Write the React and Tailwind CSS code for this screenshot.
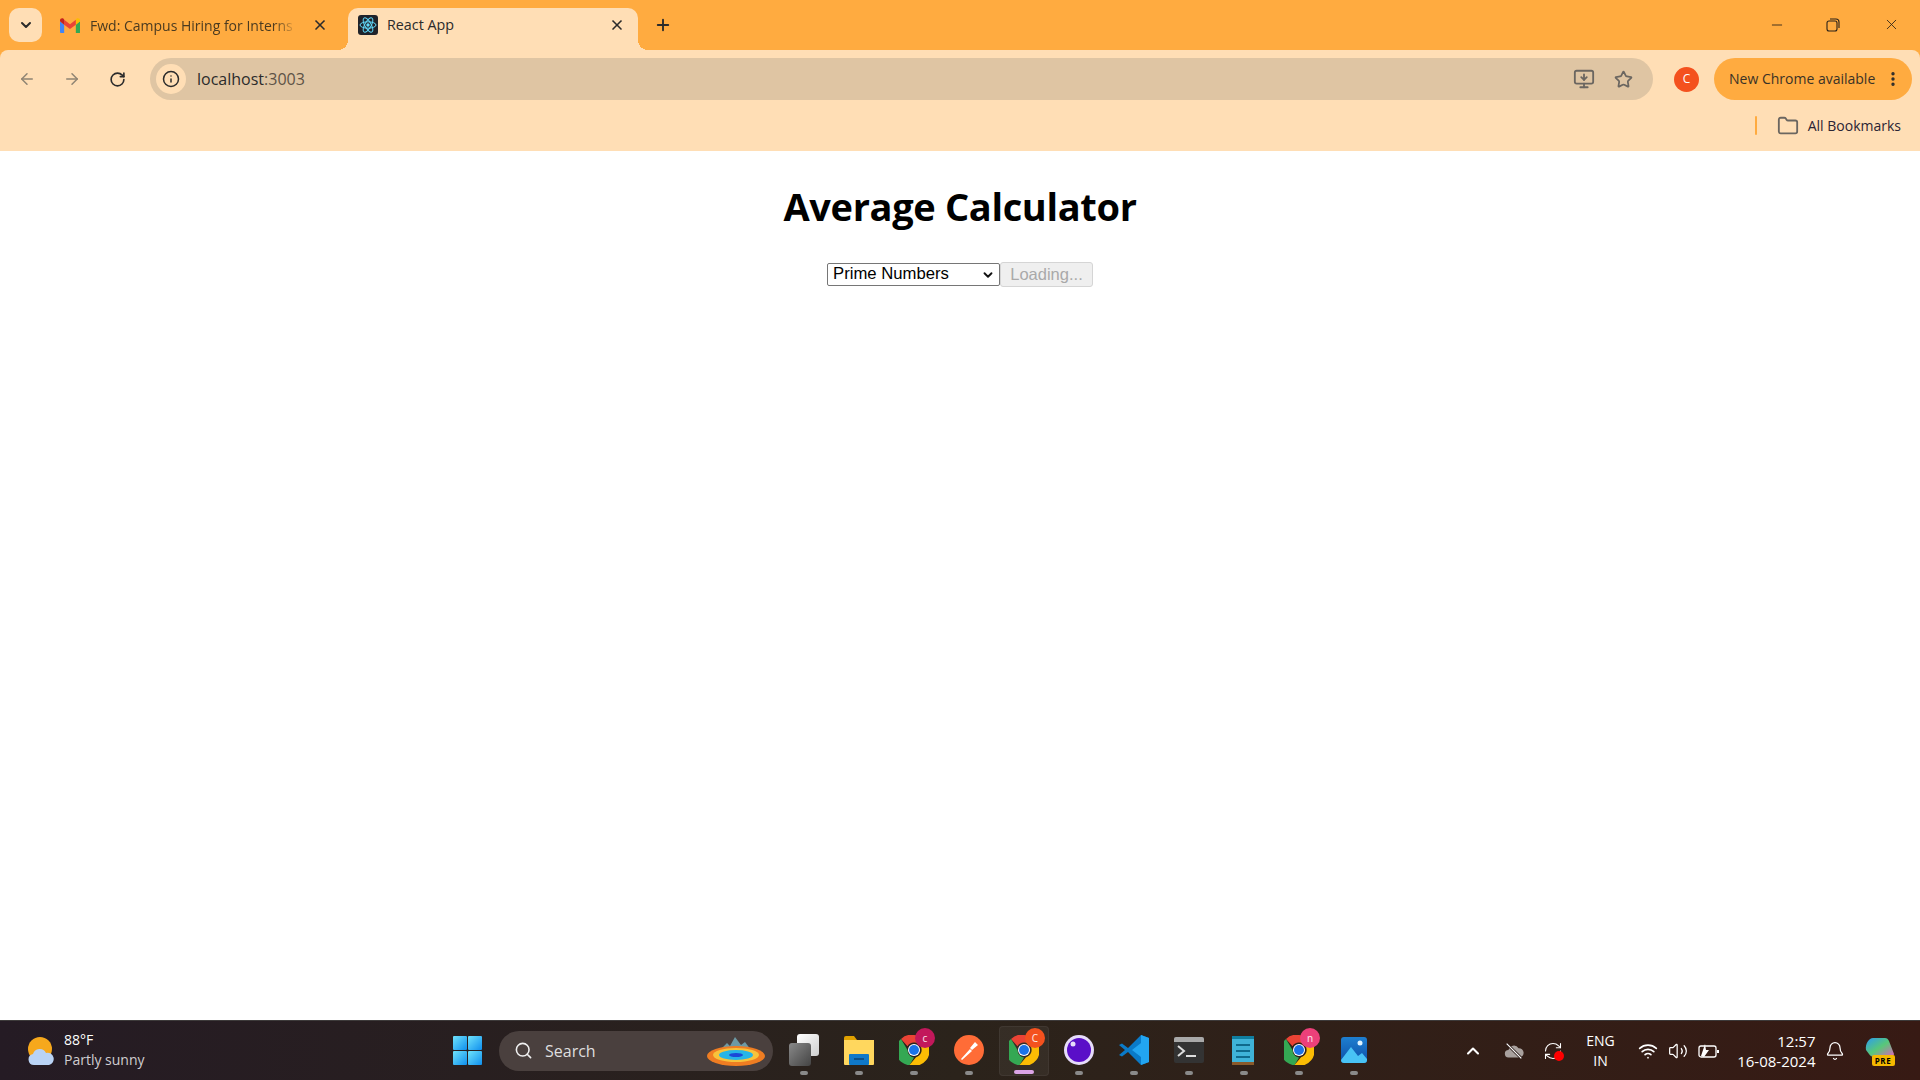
import {
  ArrowLeft,
  ArrowRight,
  RotateCw,
  Info,
  Star,
  Folder,
  ChevronDown,
  ChevronUp,
  X,
  Plus,
  Minus,
  Search,
  Wifi,
  Volume2,
  Bell,
  MonitorDown,
  EllipsisVertical,
  RefreshCw,
} from 'lucide-react';

const GmailIcon = () => (
  <svg viewBox="0 0 24 18" width="20" height="15" className="flex-none">
    <path d="M1 18h4V8L0 4v12.500A1.500 1.500 0 0 0 1 18z" fill="#4285f4" />
    <path d="M19 18h4a1 1 0 0 0 1-1.500V4l-5 4z" fill="#34a853" />
    <path d="M19 2v6l5-4V2.500C24 .5 21.500-.5 20 .7z" fill="#fbbc04" />
    <path d="M5 8V2l7 5.500L19 2v6l-7 5.300z" fill="#ea4335" />
    <path d="M0 2.500V4l5 4V2L4 .7C2.500-.5 0 .5 0 2.500z" fill="#c5221f" />
  </svg>
);

const ReactIcon = () => (
  <svg viewBox="0 0 20 20" width="20" height="20" className="flex-none">
    <rect width="20" height="20" rx="3" fill="#20232a" />
    <g fill="none" stroke="#61dafb" strokeWidth="1">
      <ellipse cx="10" cy="10" rx="8" ry="3.200" />
      <ellipse cx="10" cy="10" rx="8" ry="3.200" transform="rotate(60 10 10)" />
      <ellipse cx="10" cy="10" rx="8" ry="3.200" transform="rotate(120 10 10)" />
    </g>
    <circle cx="10" cy="10" r="1.700" fill="#61dafb" />
  </svg>
);

const ChromeIcon = ({ badge, badgeColor }) => (
  <div className="relative w-[30px] h-[30px]">
    <svg viewBox="0 0 30 30" width="30" height="30">
      <path d="M15 0a15 15 0 0 1 13 7.500H15a7.500 7.500 0 0 0-6.500 3.750L2 3.900A15 15 0 0 1 15 0z" fill="#ea4335" />
      <path d="M2 3.900l6.500 11.100A7.500 7.500 0 0 0 15 22.500l-4.500 7.800A15 15 0 0 1 2 3.900z" fill="#34a853" />
      <path d="M28 7.500A15 15 0 0 1 10.500 30l6.500-7.800A7.500 7.500 0 0 0 21.500 11 7.500 7.500 0 0 0 15 7.500z" fill="#fbbc04" />
      <circle cx="15" cy="15" r="6" fill="#fff" />
      <circle cx="15" cy="15" r="5" fill="#1a73e8" />
    </svg>
    <span
      className={`absolute -top-[7px] -right-[6px] w-[20px] h-[20px] rounded-full flex items-center justify-center text-[10px] leading-none text-white/90 ${badgeColor}`}
    >
      {badge}
    </span>
  </div>
);

const WeatherIcon = () => (
  <svg viewBox="0 0 28 30" width="28" height="30">
    <circle cx="13" cy="13" r="12" fill="#f6a81c" />
    <path d="M7 29a5.500 5.500 0 0 1-1-10.900 7 7 0 0 1 13-1.200 6 6 0 0 1 3 12.100z" fill="#b9d3f5" />
  </svg>
);

const WindowsIcon = () => (
  <svg viewBox="0 0 29 29" width="29" height="29">
    <defs>
      <linearGradient id="win" x1="0" y1="0" x2="1" y2="1">
        <stop offset="0" stopColor="#6fe3fb" />
        <stop offset="1" stopColor="#0f8fee" />
      </linearGradient>
    </defs>
    <rect x="0" y="0" width="14" height="14" rx="1" fill="url(#win)" />
    <rect x="15" y="0" width="14" height="14" rx="1" fill="url(#win)" />
    <rect x="0" y="15" width="14" height="14" rx="1" fill="url(#win)" />
    <rect x="15" y="15" width="14" height="14" rx="1" fill="url(#win)" />
  </svg>
);

const GeyserIcon = () => (
  <svg viewBox="0 0 58 32" width="58" height="32">
    <path d="M14 14l6-6 3 3 5-9 6 8 4-3 6 8z" fill="#6d9aa5" />
    <ellipse cx="29" cy="21" rx="29" ry="10" fill="#ef7d22" />
    <ellipse cx="29" cy="20" rx="23" ry="7" fill="#f7c33b" />
    <ellipse cx="29" cy="20" rx="17" ry="5" fill="#26b5e8" />
    <ellipse cx="29" cy="20" rx="7" ry="2" fill="#1a49d8" />
  </svg>
);

const TaskView = () => (
  <div className="relative w-[30px] h-[32px]">
    <div className="absolute left-[8px] top-0 w-[22px] h-[22px] rounded-[3px] bg-gradient-to-br from-white to-[#cfcfcf]" />
    <div className="absolute left-0 top-[9px] w-[22px] h-[23px] rounded-[3px] bg-gradient-to-br from-[#8a8a8a] to-[#444]" />
  </div>
);

const FilesIcon = () => (
  <svg viewBox="0 0 30 30" width="30" height="30">
    <path d="M0 3a2 2 0 0 1 2-2h8l3 4H0z" fill="#e0a100" />
    <path d="M0 5h30v24a1 1 0 0 1-1 1H1a1 1 0 0 1-1-1z" fill="#ffd75e" />
    <rect x="5" y="19" width="20" height="11" rx="1" fill="#0f78c8" />
    <rect x="10" y="23" width="10" height="2" fill="#0b4f88" />
  </svg>
);

const PostmanIcon = () => (
  <svg viewBox="0 0 30 30" width="30" height="30">
    <circle cx="15" cy="15" r="15" fill="#ff6c37" />
    <path d="M7 24l9-10 2 2-10 9z M16 13l5-6 3 3-6 5z" fill="#fff" />
  </svg>
);

const OrbIcon = () => (
  <svg viewBox="0 0 30 30" width="30" height="30">
    <circle cx="15" cy="15" r="15" fill="#e6dcfa" />
    <circle cx="15" cy="15" r="12" fill="#5a0fc8" />
    <circle cx="9" cy="9" r="2.500" fill="#e6dcfa" />
  </svg>
);

const VsCodeIcon = () => (
  <svg viewBox="0 0 30 30" width="30" height="30">
    <path d="M22 0L9 13 3 8.500 0 10l6 5-6 5 3 1.500L9 17l13 13 8-3V3z" fill="#0a7ac8" />
    <path d="M22 0l8 3v24l-8 3zM22 8l-9 7 9 7z" fill="#22a5f1" fillRule="evenodd" />
  </svg>
);

const TerminalIcon = () => (
  <svg viewBox="0 0 30 26" width="30" height="26">
    <rect width="30" height="26" rx="2" fill="#333" />
    <path d="M0 2a2 2 0 0 1 2-2h26a2 2 0 0 1 2 2v3H0z" fill="#a9a9a9" />
    <path d="M4 9l6 5-6 5" fill="none" stroke="#ddd" strokeWidth="2" />
    <rect x="12" y="18" width="10" height="2" fill="#ddd" />
  </svg>
);

const NotepadIcon = () => (
  <svg viewBox="0 0 24 30" width="24" height="30">
    <rect y="2" width="22" height="28" fill="#3fb3d8" />
    <rect y="27" width="22" height="3" fill="#8a5a2b" />
    <rect y="1" width="22" height="3" fill="#0f7ea0" />
    <rect x="4" y="9" width="14" height="2" fill="#0f6a8c" />
    <rect x="4" y="15" width="14" height="2" fill="#0f6a8c" />
    <rect x="4" y="21" width="14" height="2" fill="#0f6a8c" />
  </svg>
);

const PhotosIcon = () => (
  <svg viewBox="0 0 26 26" width="26" height="26">
    <defs>
      <linearGradient id="ph" x1="0" y1="0" x2="0" y2="1">
        <stop offset="0" stopColor="#1e7fd0" />
        <stop offset="1" stopColor="#0d4fa8" />
      </linearGradient>
    </defs>
    <rect width="26" height="26" rx="3" fill="url(#ph)" />
    <circle cx="19" cy="6" r="2.500" fill="#dff3ff" />
    <path d="M0 23l10-13 7 9 4-3 5 6v1a3 3 0 0 1-3 3H3a3 3 0 0 1-3-3z" fill="#48c3f5" />
  </svg>
);

const CopilotIcon = () => (
  <div className="relative w-[30px] h-[30px]">
    <svg viewBox="0 0 30 24" width="30" height="24">
      <defs>
        <linearGradient id="cp" x1="0" y1="0" x2="1" y2="1">
          <stop offset="0" stopColor="#2b9cf0" />
          <stop offset="0.5" stopColor="#58c878" />
          <stop offset="1" stopColor="#e060c0" />
        </linearGradient>
      </defs>
      <path d="M8 2h12c2 0 3 1 4 3l5 13c0 2-2 3-4 3H10c-3 0-5-1-6-3L1 14C0 8 4 2 8 2z" fill="url(#cp)" />
    </svg>
    <span className="absolute left-[7px] top-[19px] w-[23px] h-[11px] rounded-[2px] bg-[#f5b800] text-[8px] leading-[11px] font-bold text-center text-black tracking-[0.5px]">
      PRE
    </span>
  </div>
);

const TaskApp = ({ children, active }) => (
  <div
    className={`relative w-[50px] h-[50px] mx-[2.5px] flex items-center justify-center rounded-[4px] ${
      active ? 'bg-white/5 border border-white/5' : ''
    }`}
  >
    <div className="-mt-[2px]">{children}</div>
    <span
      className={`absolute bottom-[1px] left-1/2 -translate-x-1/2 h-[4px] rounded-full ${
        active ? 'w-[20px] bg-[#dba4e6]' : 'w-[8px] bg-[#8a8a8a]'
      }`}
    />
  </div>
);

const App = () => {
  return (
    <div className="flex flex-col h-screen overflow-hidden bg-[#ffab40] font-['Open_Sans',sans-serif]">
      {/* tab strip */}
      <div className="flex items-end h-[50px] flex-none bg-[#ffab40] text-[#3a3226]">
        <button className="self-start mt-[8px] ml-[9px] w-[33px] h-[34px] rounded-[10px] bg-[#ffdeb5] flex items-center justify-center">
          <ChevronDown size={16} strokeWidth={3} color="#2b2b2b" />
        </button>
        <div className="flex items-center w-[306px] h-[42px] pb-[8px] pl-[18px] pr-[20px]">
          <GmailIcon />
          <span className="ml-[10px] w-[208px] whitespace-nowrap overflow-hidden text-[14px] text-[#4a3a20] [mask-image:linear-gradient(to_right,black_88%,transparent)]">
            Fwd: Campus Hiring for Interns
          </span>
          <X size={16} strokeWidth={2.5} color="#2b2b2b" className="ml-auto" />
        </div>
        <div className="relative flex items-center w-[290px] h-[42px] pb-[8px] pl-[10px] pr-[13px] bg-[#ffdeb5] rounded-t-[10px]">
          <span className="absolute -left-[10px] bottom-0 w-[10px] h-[10px] bg-[radial-gradient(circle_at_0_0,#ffab40_10px,#ffdeb5_10px)]" />
          <ReactIcon />
          <span className="ml-[9px] text-[14.3px] text-[#2b2b2b]">React App</span>
          <X size={16} strokeWidth={2.5} color="#2b2b2b" className="ml-auto" />
          <span className="absolute -right-[10px] bottom-0 w-[10px] h-[10px] bg-[radial-gradient(circle_at_100%_0,#ffab40_10px,#ffdeb5_10px)]" />
        </div>
        <div className="self-center ml-[16px]">
          <Plus size={18} strokeWidth={2.5} color="#2b2b2b" />
        </div>
        <div className="ml-auto self-start flex items-center mt-[16px] mr-[20px] text-[#2b2218]">
          <Minus size={16} strokeWidth={1.3} />
          <svg viewBox="0 0 14 14" width="14" height="14" fill="none" stroke="currentColor" strokeWidth="1.100" className="ml-[41px]">
            <rect x="1" y="3" width="10" height="10" rx="2" />
            <path d="M4 1h6a3 3 0 0 1 3 3v6" />
          </svg>
          <X size={17} strokeWidth={1.2} className="ml-[43px]" />
        </div>
      </div>

      {/* toolbar */}
      <div className="flex items-center h-[58px] flex-none bg-[#ffdeb5] rounded-t-[8px]">
        <div className="flex items-center w-[150px] pl-[18px] gap-[27px]">
          <ArrowLeft size={18} color="#8f8473" />
          <ArrowRight size={18} color="#8f8473" />
          <RotateCw size={17} strokeWidth={2.3} color="#2b2b2b" className="ml-[1px]" />
        </div>
        <div className="flex items-center w-[1503px] h-[42px] rounded-full bg-[#dfc5a3] pl-[6px] pr-[20px]">
          <div className="w-[30px] h-[30px] rounded-full bg-[#ffdeb5] flex items-center justify-center">
            <Info size={18} color="#2b2b2b" />
          </div>
          <span className="ml-[11px] text-[16px] text-[#2b2b2b]">
            localhost<span className="text-[#5d5346]">:3003</span>
          </span>
          <MonitorDown size={22} color="#6b6660" className="ml-auto" />
          <Star size={19} strokeWidth={2.2} color="#6b6660" className="ml-[19px]" />
        </div>
        <div className="ml-[21px] w-[25px] h-[25px] rounded-full bg-[#f4511e] text-white text-[12px] flex items-center justify-center">
          C
        </div>
        <div className="ml-[15px] flex items-center justify-between w-[198px] h-[42px] rounded-full bg-[#ffab40] pl-[15px] pr-[10px] text-[14px] text-[#3a3226]">
          <span className="-mt-[1px]">New Chrome available</span>
          <EllipsisVertical size={18} strokeWidth={2.5} color="#2b2b2b" />
        </div>
      </div>

      {/* bookmarks */}
      <div className="flex items-center justify-end h-[43px] flex-none bg-[#ffdeb5] pb-[8px] pr-[19px]">
        <span className="w-[2px] h-[19px] bg-[#ffab40] rounded" />
        <Folder size={22} color="#6b6660" className="ml-[20px]" />
        <span className="ml-[9px] text-[14px] text-[#2b2434]">All Bookmarks</span>
      </div>

      {/* page */}
      <main className="flex-1 flex flex-col items-center bg-white text-black">
        <h1 className="mt-[28px] text-[38px] leading-[54px] font-bold tracking-[-0.35px]">Average Calculator</h1>
        <div className="flex items-center mt-[29px] font-['Liberation_Sans',sans-serif]">
          <div className="relative">
            <select
              defaultValue="prime"
              className="block appearance-none w-[173px] h-[23px] border border-[#767676] rounded-[2px] bg-white pl-[5px] text-[16.7px] leading-none"
            >
              <option value="prime">Prime Numbers</option>
            </select>
            <ChevronDown
              size={14}
              strokeWidth={3.2}
              color="#111"
              className="absolute right-[5px] top-[5px] pointer-events-none"
            />
          </div>
          <button
            disabled
            className="w-[93px] h-[25px] border border-[#d5d5d5] rounded-[3px] bg-[#efefef] text-[16.5px] leading-none text-[#a9a9a9]"
          >
            Loading...
          </button>
        </div>
      </main>

      {/* taskbar */}
      <div className="flex items-center h-[60px] flex-none border-t border-[#3d3a3a] bg-gradient-to-r from-[#251b24] via-[#2b231b] to-[#371a14] text-white">
        <div className="flex items-center w-[453px] pl-[27px]">
          <WeatherIcon />
          <div className="ml-[9px] -mt-[2px] text-[14px] leading-[20px]">
            <div>88°F</div>
            <div className="text-[#d0cdd0]">Partly sunny</div>
          </div>
        </div>
        <WindowsIcon />
        <div className="ml-[17px] flex items-center w-[274px] h-[40px] rounded-full bg-[#4a403e] pl-[15px] pr-[8px]">
          <Search size={19} color="#f0f0f0" />
          <span className="ml-[12px] text-[16px] text-[#dedede]">Search</span>
          <div className="ml-auto">
            <GeyserIcon />
          </div>
        </div>
        <div className="ml-[3.5px] flex items-center">
          <TaskApp>
            <TaskView />
          </TaskApp>
          <TaskApp>
            <FilesIcon />
          </TaskApp>
          <TaskApp>
            <ChromeIcon badge="c" badgeColor="bg-[#c2185b]" />
          </TaskApp>
          <TaskApp>
            <PostmanIcon />
          </TaskApp>
          <TaskApp active>
            <ChromeIcon badge="C" badgeColor="bg-[#f4511e]" />
          </TaskApp>
          <TaskApp>
            <OrbIcon />
          </TaskApp>
          <TaskApp>
            <VsCodeIcon />
          </TaskApp>
          <TaskApp>
            <TerminalIcon />
          </TaskApp>
          <TaskApp>
            <NotepadIcon />
          </TaskApp>
          <TaskApp>
            <ChromeIcon badge="n" badgeColor="bg-[#ec407a]" />
          </TaskApp>
          <TaskApp>
            <PhotosIcon />
          </TaskApp>
        </div>
        <div className="ml-[81px] flex items-center">
          <ChevronUp size={20} strokeWidth={2.5} />
          <svg viewBox="0 0 24 24" width="22" height="22" className="ml-[20px]">
            <path d="M6 19a4 4 0 0 1 0-8 6 6 0 0 1 11-2 5 5 0 0 1 1 10z" fill="#a9a19e" />
            <path d="M4 4l16 16" stroke="#2b1a16" strokeWidth="3" />
            <path d="M4 4l16 16" stroke="#fff" strokeWidth="1.300" />
          </svg>
          <div className="relative ml-[18px]">
            <RefreshCw size={20} strokeWidth={1.3} />
            <span className="absolute right-[-1px] bottom-[0px] w-[10px] h-[10px] rounded-full bg-[#ff0000]" />
          </div>
          <div className="ml-[20px] w-[36px] text-center text-[14px] leading-[20px]">
            <div>ENG</div>
            <div>IN</div>
          </div>
          <Wifi size={20} className="ml-[19px]" />
          <Volume2 size={20} strokeWidth={1.5} className="ml-[10px]" />
          <svg viewBox="0 0 22 18" width="22" height="18" fill="none" stroke="currentColor" strokeWidth="1.300" className="ml-[10px]">
            <rect x="1" y="4" width="17" height="11" rx="2" />
            <path d="M20 8v3" strokeWidth="2" />
            <path d="M3 14l4-12 1 6h3l-5 7z" fill="currentColor" stroke="none" />
          </svg>
          <div className="ml-[16px] w-[80px] text-right text-[15px] leading-[20px] whitespace-nowrap">
            <div>12:57</div>
            <div>16-08-2024</div>
          </div>
          <Bell size={20} strokeWidth={1.5} className="ml-[9px]" />
          <div className="ml-[20px]">
            <CopilotIcon />
          </div>
        </div>
      </div>
    </div>
  );
};

export default App;
